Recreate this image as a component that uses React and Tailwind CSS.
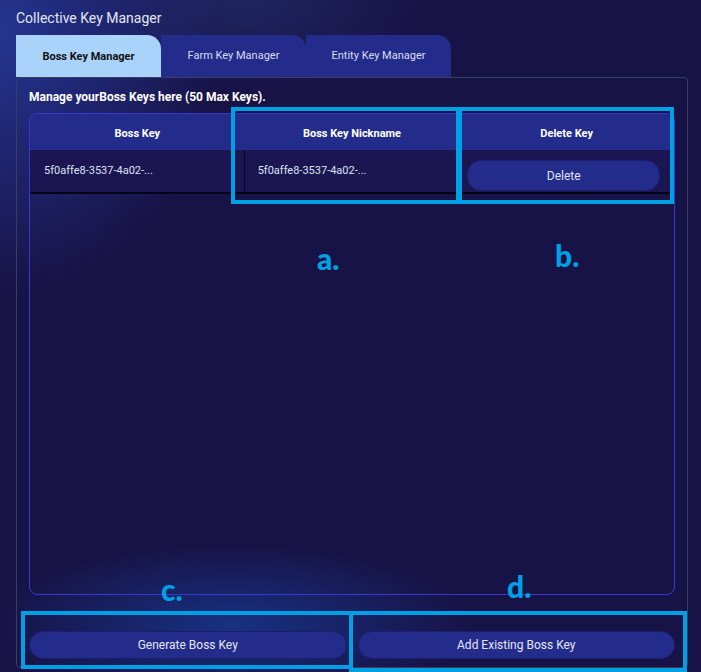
import React from 'react';

const keys = [{ key: '5f0affe8-3537-4a02-...', nickname: '5f0affe8-3537-4a02-...' }];

const tabs = ['Boss Key Manager', 'Farm Key Manager', 'Entity Key Manager'];

const Mark = ({ className, label }) => (
  <div className={`absolute text-[#00a0e4] font-['Lato',sans-serif] font-black text-[30px] leading-none ${className}`}>
    {label}
  </div>
);

export default function App() {
  return (
    <div className="relative w-[701px] h-[672px] overflow-hidden bg-[#181347] bg-[radial-gradient(ellipse_220px_260px_at_0%_5%,#243591_0%,transparent_100%),radial-gradient(ellipse_240px_80px_at_33%_93%,#173182_0%,transparent_100%),radial-gradient(ellipse_180px_90px_at_35%_0%,#1f2560_0%,transparent_100%)] font-['Roboto','Liberation_Sans',sans-serif] text-white">
      <div className="px-4 pt-[9px] text-[14px] leading-[18px] text-[#e4e6f4]">Collective Key Manager</div>

      {/* Tabs */}
      <div className="flex ml-4 mt-2">
        {tabs.map((t, i) => (
          <div
            key={t}
            className={`w-[145px] h-[42px] flex items-center justify-center rounded-tr-[14px] text-[11px] ${
              i === 0 ? 'bg-[#a9d3fb] text-[#111] font-bold pt-[3px]' : 'bg-[#232c8b] text-[#d8dcf0]'
            }`}
          >
            {t}
          </div>
        ))}
      </div>

      {/* Panel */}
      <div className="ml-4 w-[672px] h-[591px] border border-[#3a3e5e] rounded-[4px] px-3 pb-2 flex flex-col">
        <div className="pt-[11px] text-[12px] font-bold leading-[16px]">Manage yourBoss Keys here (50 Max Keys).</div>

        <div className="mt-[8px] w-[646px] h-[482px] border border-[#3838cc] rounded-[8px] overflow-hidden">
          <div className="grid grid-cols-3 h-[36px] pt-[5px] bg-[#232c8b] text-[11px] font-bold">
            <div className="flex items-center justify-center">Boss Key</div>
            <div className="flex items-center justify-center">Boss Key Nickname</div>
            <div className="flex items-center justify-center">Delete Key</div>
          </div>
          {keys.map((k) => (
            <div key={k.key} className="grid grid-cols-3 h-[44px] bg-[#1b1652] border-b-2 border-[#05051a] text-[11px] text-[#dfe2f3]">
              <div className="flex items-center pl-[14px] border-r border-[#05051a]">{k.key}</div>
              <div className="flex items-center pl-[13px]">{k.nickname}</div>
              <div className="flex items-start pt-[10px] pl-2 pr-[14px]">
                <button className="w-full h-[31px] rounded-[14px] bg-[#232c8b] border border-[#1a1f70] text-[12px] text-[#dfe2f3]">
                  Delete
                </button>
              </div>
            </div>
          ))}
        </div>

        <div className="mt-auto w-[646px] grid grid-cols-2 gap-[11px]">
          <button className="h-[28px] rounded-[14px] bg-[#232c8b] border border-[#1a1f70] text-[12px] text-[#e4e6f4]">Generate Boss Key</button>
          <button className="h-[28px] rounded-[14px] bg-[#232c8b] border border-[#1a1f70] text-[12px] text-[#e4e6f4]">Add Existing Boss Key</button>
        </div>
      </div>

      {/* Annotations */}
      <div className="absolute left-[231px] top-[107px] w-[229px] h-[97px] border-4 border-[#00a0e4]" />
      <div className="absolute left-[458px] top-[107px] w-[216px] h-[97px] border-4 border-[#00a0e4]" />
      <div className="absolute left-[21px] top-[611px] w-[332px] h-[58px] border-4 border-[#00a0e4]" />
      <div className="absolute left-[349px] top-[611px] w-[338px] h-[61px] border-4 border-[#00a0e4]" />
      <Mark className="left-[317px] top-[243px]" label="a." />
      <Mark className="left-[555px] top-[240px]" label="b." />
      <Mark className="left-[161px] top-[574px]" label="c." />
      <Mark className="left-[507px] top-[571px]" label="d." />
    </div>
  );
}
